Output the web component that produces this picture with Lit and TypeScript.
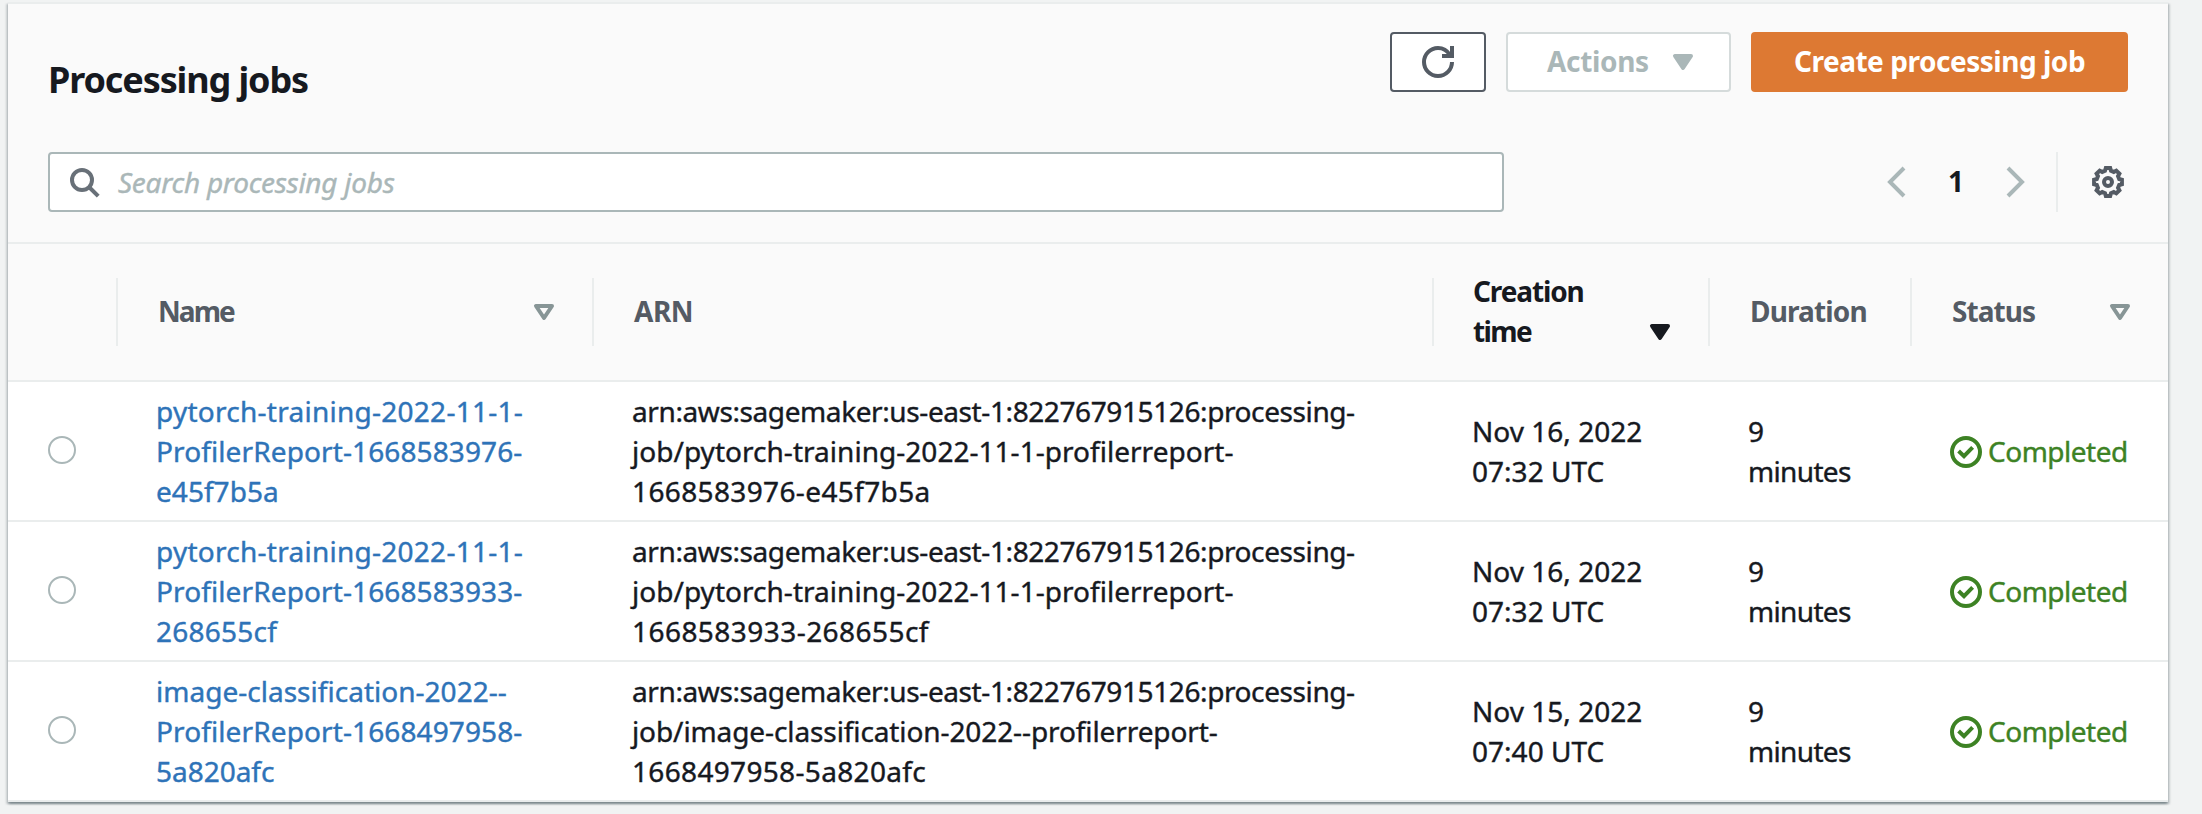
import { LitElement, html, css, svg, nothing } from "lit";
import { customElement, property } from "lit/decorators.js";
import { classMap } from "lit/directives/class-map.js";

/** A single line of text and its tracking in pixels. */
type Line = [text: string, tracking: number];

interface Job {
  name: Line[];
  arn: Line[];
  created: Line[];
}

const ARN_PREFIX: Line = ["arn:aws:sagemaker:us-east-1:822767915126:processing-", -0.4];

const JOBS: Job[] = [
  {
    name: [["pytorch-training-2022-11-1-", 0.26], ["ProfilerReport-1668583976-", 0.11], ["e45f7b5a", 0.04]],
    arn: [ARN_PREFIX, ["job/pytorch-training-2022-11-1-profilerreport-", 0.03], ["1668583976-e45f7b5a", 0.37]],
    created: [["Nov 16, 2022", 0.02], ["07:32 UTC", 0.02]],
  },
  {
    name: [["pytorch-training-2022-11-1-", 0.26], ["ProfilerReport-1668583933-", 0.11], ["268655cf", 0.24]],
    arn: [ARN_PREFIX, ["job/pytorch-training-2022-11-1-profilerreport-", 0.03], ["1668583933-268655cf", 0.45]],
    created: [["Nov 16, 2022", 0.02], ["07:32 UTC", 0.02]],
  },
  {
    name: [["image-classification-2022--", 0.02], ["ProfilerReport-1668497958-", 0.11], ["5a820afc", -0.02]],
    arn: [ARN_PREFIX, ["job/image-classification-2022--profilerreport-", -0.1], ["1668497958-5a820afc", 0.33]],
    created: [["Nov 15, 2022", 0.02], ["07:40 UTC", 0.02]],
  },
];

/** Closed outline of an eight-toothed gear centred on (8, 8). */
const gearOutline = (): string => {
  const points: string[] = [];
  for (let tooth = 0; tooth < 8; tooth++) {
    for (const [radius, offset] of [[5.8, -15], [7.05, -9], [7.05, 9], [5.8, 15]]) {
      const angle = ((tooth * 45 + offset) * Math.PI) / 180;
      points.push(`${(8 + radius * Math.sin(angle)).toFixed(2)} ${(8 - radius * Math.cos(angle)).toFixed(2)}`);
    }
  }
  return `M${points.join("L")}Z`;
};

const ICONS = {
  refresh: svg`<path d="M10 5h5V0"/><path d="M15 8a7 7 0 1 1-7-7c2.5 0 4.6 1.3 5.9 3.4L14.5 5"/>`,
  caret: svg`<path class="solid round" d="M4 5h8l-4 6z"/>`,
  sort: svg`<path class="round" d="M4 5h8l-4 6z"/>`,
  search: svg`<circle cx="7" cy="7" r="5"/><path d="m10.5 10.5 4.6 4.6"/>`,
  previous: svg`<path d="m12 1-7 7 7 7"/>`,
  next: svg`<path d="m4 1 7 7-7 7"/>`,
  gear: svg`<path d=${gearOutline()}/><circle cx="8" cy="8" r="2"/>`,
  success: svg`<circle cx="8" cy="8" r="7"/><path d="M4.3 7.5 7 10.1l4.3-4.4"/>`,
};

@customElement("ui-icon")
export class UiIcon extends LitElement {
  @property() name: keyof typeof ICONS = "caret";

  static styles = css`
    :host { display: block; flex: none; width: 32px; height: 32px; }
    svg { display: block; width: 100%; height: 100%; overflow: visible; fill: none; stroke: currentColor; stroke-width: 2; }
    .solid { fill: currentColor; }
    .round { stroke-linejoin: round; }
  `;

  render() {
    return html`<svg viewBox="0 0 16 16" aria-hidden="true">${ICONS[this.name]}</svg>`;
  }
}

@customElement("app-root")
export class AppRoot extends LitElement {
  static styles = css`
    :host {
      display: block;
      box-sizing: border-box;
      height: 814px;
      padding: 2px 34px 12px 8px;
      background: #f1f3f3;
      color: #16191f;
      font: 400 28px/40px "Noto Sans", "Open Sans", sans-serif;
      overflow: hidden;
    }
    * { box-sizing: border-box; }
    .card {
      height: 800px;
      background: #fff;
      border-top: 2px solid #eaeded;
      box-shadow: 0 2px 2px 0 rgba(0, 28, 36, 0.3), 2px 2px 2px 0 rgba(0, 28, 36, 0.15),
        -2px 2px 2px 0 rgba(0, 28, 36, 0.15);
    }
    .top {
      display: flex;
      flex-direction: column;
      height: 240px;
      padding: 28px 40px 0;
      background: #fafafa;
      border-bottom: 2px solid #eaeded;
    }
    .heading { display: flex; justify-content: space-between; height: 60px; }
    h2 { margin: 26px 0 0; font-size: 36px; line-height: 44px; letter-spacing: -1.12px; height: 44px; }
    .buttons { display: flex; gap: 20px; }
    .button {
      display: flex;
      align-items: center;
      justify-content: center;
      height: 60px;
      border: 2px solid #545b64;
      border-radius: 4px;
      background: #fff;
      color: #545b64;
      font-weight: 700;
      white-space: nowrap;
    }
    .label { margin-top: -2px; }
    .refresh { width: 96px; }
    .actions { width: 225px; border-color: #d5dbdb; color: #aab7b8; justify-content: space-between; padding: 0 30px 0 39px; letter-spacing: -0.34px; }
    .create { width: 377px; border-color: #dd7933; background: #dd7933; color: #fff; letter-spacing: -0.47px; }
    .filter { display: flex; justify-content: space-between; align-items: center; margin-top: 60px; height: 60px; }
    .search {
      display: flex;
      align-items: center;
      gap: 18px;
      width: 1456px;
      height: 60px;
      padding-left: 18px;
      border: 2px solid #aab7b8;
      border-radius: 4px;
      background: #fff;
      color: #687078;
    }
    .placeholder { font-style: italic; letter-spacing: -0.27px; color: #aab7b8; -webkit-text-stroke: 0.4px currentColor; }
    .pager { display: flex; align-items: center; height: 60px; color: #aab7b8; }
    .page { width: 88px; text-align: center; font-weight: 700; color: #16191f; margin-top: -2px; }
    .settings { display: flex; align-items: center; height: 60px; margin-left: 24px; padding: 0 4px 0 34px; border-left: 2px solid #eaeded; color: #545b64; }
    .row { display: grid; grid-template-columns: 108px 476px 840px 276px 202px 258px; align-items: center; }
    .head { height: 138px; background: #fafafa; border-bottom: 2px solid #eaeded; color: #545b64; font-weight: 700; }
    .th { display: flex; align-items: center; justify-content: space-between; height: 68px; padding: 0 32px 0 40px; border-left: 2px solid #eaeded; }
    .th.blank { border-left: 0; }
    .th.sorted { color: #16191f; align-items: flex-end; padding-left: 39px; }
    .th-text { margin: -8px 0; padding-bottom: 2px; }
    .th.sorted .th-text { margin-bottom: -7px; }
    .th ui-icon { color: #879596; }
    .th.sorted ui-icon { color: #16191f; margin-bottom: -2px; }
    .body { height: 140px; border-bottom: 2px solid #eaeded; -webkit-text-stroke: 0.4px currentColor; }
    .td { padding-left: 40px; }
    .line { display: block; white-space: nowrap; }
    .link { color: #2e73b8; text-decoration: none; }
    .radio { width: 28px; height: 28px; margin: -2px 0 0 40px; border: 2px solid #aab7b8; border-radius: 50%; background: #fff; }
    .status { display: flex; align-items: center; gap: 6px; color: #3d8224; }
    .status ui-icon { margin-top: 2px; }
  `;

  private lines(lines: Line[]) {
    return lines.map(([text, tracking]) => html`<span class="line" style="letter-spacing:${tracking}px">${text}</span>`);
  }

  private header(lines: Line[], icon?: "sort" | "caret") {
    return html`<div class=${classMap({ th: true, sorted: icon === "caret" })}>
      <div class="th-text">${this.lines(lines)}</div>
      ${icon ? html`<ui-icon name=${icon}></ui-icon>` : nothing}
    </div>`;
  }

  private job(job: Job) {
    return html`<div class="row body">
      <div class="radio"></div>
      <div class="td"><a class="link">${this.lines(job.name)}</a></div>
      <div class="td">${this.lines(job.arn)}</div>
      <div class="td">${this.lines(job.created)}</div>
      <div class="td">${this.lines([["9", 0], ["minutes", -0.65]])}</div>
      <div class="td status"><ui-icon name="success"></ui-icon>${this.lines([["Completed", -0.5]])}</div>
    </div>`;
  }

  render() {
    return html`<section class="card">
      <div class="top">
        <div class="heading">
          <h2>Processing jobs</h2>
          <div class="buttons">
            <div class="button refresh"><ui-icon name="refresh"></ui-icon></div>
            <div class="button actions"><span class="label">Actions</span><ui-icon name="caret"></ui-icon></div>
            <div class="button create"><span class="label">Create processing job</span></div>
          </div>
        </div>
        <div class="filter">
          <div class="search"><ui-icon name="search"></ui-icon><span class="placeholder">Search processing jobs</span></div>
          <div class="pager">
            <ui-icon name="previous"></ui-icon>
            <span class="page">1</span>
            <ui-icon name="next"></ui-icon>
            <div class="settings"><ui-icon name="gear"></ui-icon></div>
          </div>
        </div>
      </div>
      <div class="row head">
        <div class="th blank"></div>
        ${this.header([["Name", -1.95]], "sort")}
        ${this.header([["ARN", -0.5]])}
        ${this.header([["Creation", -1.13], ["time", -1.61]], "caret")}
        ${this.header([["Duration", -0.85]])}
        ${this.header([["Status", -0.94]], "sort")}
      </div>
      ${JOBS.map((job) => this.job(job))}
    </section>`;
  }
}
